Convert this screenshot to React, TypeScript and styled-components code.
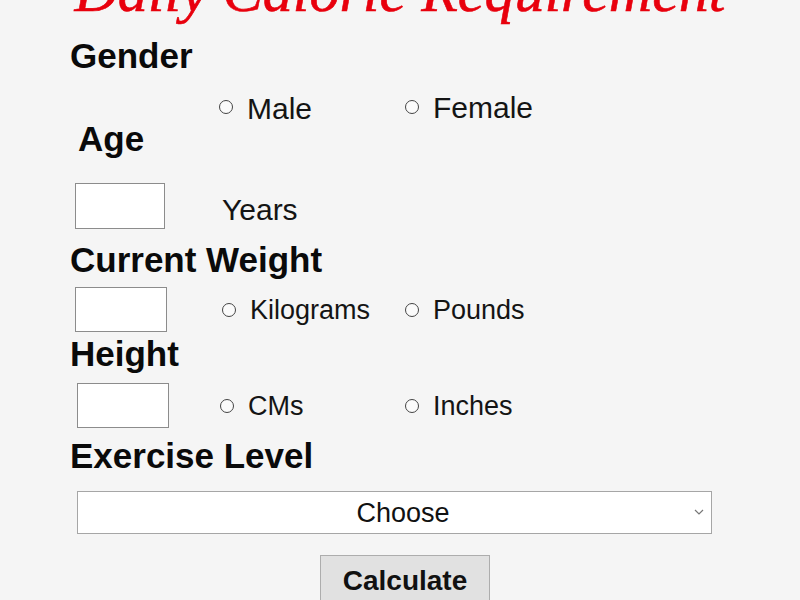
import React from "react";
import styled, { createGlobalStyle } from "styled-components";

const GlobalStyle = createGlobalStyle`
  html, body {
    margin: 0;
    padding: 0;
    background: #f5f5f5;
    overflow: hidden;
  }
  body {
    font-family: "Liberation Sans", Arial, sans-serif;
    color: #111;
  }
`;

const Page = styled.div`
  width: 800px;
  height: 600px;
  overflow: hidden;
`;

const Title = styled.h1`
  margin: -39px 0 0;
  font-family: "Liberation Serif", "Times New Roman", serif;
  font-style: italic;
  font-weight: normal;
  font-size: 60px;
  line-height: 60px;
  color: #e8000d;
  text-align: center;
  white-space: nowrap;
  -webkit-text-stroke: 0.6px #e8000d;
`;

const Form = styled.form`
  padding-left: 70px;
`;

const Heading = styled.h3<{ $mt: number; $indent?: number }>`
  margin: ${(p) => p.$mt}px 0 0 ${(p) => p.$indent || 0}px;
  font-size: 35px;
  line-height: 40px;
  font-weight: bold;
  color: #0a0a0a;
`;

const Row = styled.div<{ $mt: number; $h: number; $pt?: number }>`
  display: grid;
  grid-template-columns: 144px 186px 1fr;
  align-items: center;
  margin: ${(p) => p.$mt}px 0 0 5px;
  height: ${(p) => p.$h}px;
  padding-top: ${(p) => p.$pt || 0}px;
  box-sizing: border-box;
`;

const Box = styled.input<{ $w: number; $h: number; $ml?: number }>`
  width: ${(p) => p.$w}px;
  height: ${(p) => p.$h}px;
  margin: 0 0 0 ${(p) => p.$ml || 0}px;
  padding: 0 4px;
  box-sizing: border-box;
  border: 1px solid #8c8c8c;
  background: #fff;
  outline: none;
  font-size: 20px;
`;

const Option = styled.label<{ $ml?: number; $col: number }>`
  grid-column: ${(p) => p.$col};
  display: inline-flex;
  align-items: center;
  gap: 14px;
  margin-left: ${(p) => p.$ml || 0}px;
`;

const Circle = styled.input.attrs({ type: "radio" })`
  appearance: none;
  width: 14px;
  height: 14px;
  margin: 0;
  border: 1px solid #444;
  border-radius: 50%;
  background: #fbfbfb;
  box-sizing: border-box;
`;

const OptionText = styled.span<{ $drop?: number; $lh?: number; $size?: number }>`
  font-size: ${(p) => p.$size || 27}px;
  line-height: ${(p) => p.$lh || 32}px;
  color: #141414;
  padding-top: ${(p) => (p.$drop || 0) * 2}px;
`;

const Unit = styled.span`
  grid-column: 2;
  margin-left: 3px;
  padding-top: 8px;
  font-size: 30px;
  line-height: 34px;
  color: #141414;
`;

const SelectWrap = styled.div`
  position: relative;
  width: 635px;
  height: 43px;
  margin: 15px 0 0 7px;
`;

const Select = styled.select`
  appearance: none;
  width: 100%;
  height: 100%;
  box-sizing: border-box;
  border: 1px solid #a6a6a6;
  background: #fff;
  font-family: "Liberation Sans", Arial, sans-serif;
  font-size: 27px;
  color: #111;
  text-align: center;
  text-align-last: center;
  padding: 0 0 0 17px;
  outline: none;
`;

const Chevron = styled.svg`
  position: absolute;
  right: 8px;
  top: 18px;
  pointer-events: none;
`;

const Button = styled.button`
  margin: 21px 0 0 250px;
  width: 170px;
  height: 60px;
  padding: 9px 0 0;
  box-sizing: border-box;
  background: #e1e1e1;
  border: 1px solid #adadad;
  font-family: "Liberation Sans", Arial, sans-serif;
  font-size: 28px;
  line-height: 32px;
  font-weight: bold;
  color: #111;
  display: flex;
  justify-content: center;
  align-items: flex-start;
`;

export default function App() {
  return (
    <Page>
      <GlobalStyle />
      <Title>Daily Calorie Requirement</Title>
      <Form onSubmit={(e) => e.preventDefault()}>
        <Heading $mt={15}>Gender</Heading>
        <Row $mt={15} $h={29}>
          <Option $col={2}>
            <Circle name="gender" />
            <OptionText $drop={1.5} $lh={29} $size={30}>Male</OptionText>
          </Option>
          <Option $col={3}>
            <Circle name="gender" />
            <OptionText $lh={29} $size={30}>Female</OptionText>
          </Option>
        </Row>

        <Heading $mt={-1} $indent={8}>Age</Heading>
        <Row $mt={24} $h={46}>
          <Box $w={90} $h={46} />
          <Unit>Years</Unit>
        </Row>

        <Heading $mt={11}>Current Weight</Heading>
        <Row $mt={3} $h={45} $pt={4}>
          <Box $w={92} $h={45} />
          <Option $col={2} $ml={3}>
            <Circle name="weight" />
            <OptionText>Kilograms</OptionText>
          </Option>
          <Option $col={3}>
            <Circle name="weight" />
            <OptionText>Pounds</OptionText>
          </Option>
        </Row>

        <Heading $mt={6}>Height</Heading>
        <Row $mt={9} $h={45}>
          <Box $w={92} $h={45} $ml={2} />
          <Option $col={2} $ml={1}>
            <Circle name="height" />
            <OptionText>CMs</OptionText>
          </Option>
          <Option $col={3}>
            <Circle name="height" />
            <OptionText>Inches</OptionText>
          </Option>
        </Row>

        <Heading $mt={8}>Exercise Level</Heading>
        <SelectWrap>
          <Select defaultValue="">
            <option value="">Choose</option>
            <option value="1">Sedentary</option>
            <option value="2">Lightly active</option>
            <option value="3">Moderately active</option>
            <option value="4">Very active</option>
          </Select>
          <Chevron width="10" height="6" viewBox="0 0 10 6">
            <polyline points="1,1 5,5 9,1" fill="none" stroke="#777" strokeWidth="1.2" />
          </Chevron>
        </SelectWrap>

        <Button type="submit">Calculate</Button>
      </Form>
    </Page>
  );
}
